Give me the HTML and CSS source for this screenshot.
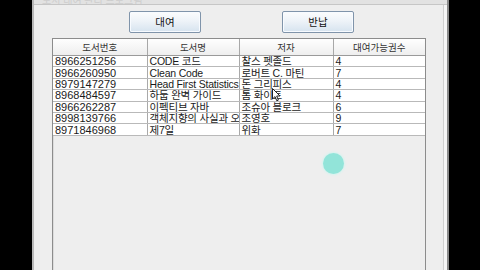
FILE: index.html
```html
<!DOCTYPE html>
<html lang="ko">
<head>
<meta charset="utf-8">
<title>도서 대여</title>
<link rel="stylesheet" href="styles.css">
</head>
<body>
<div class="window">
  <div class="titlebar"><span class="title">도서 대여 관리 프로그램</span></div>
  <div class="content">
    <div class="toolbar">
      <button class="btn">대여</button>
      <button class="btn">반납</button>
    </div>
    <div class="scrollpane">
      <table class="grid">
        <colgroup><col class="c1"><col class="c2"><col class="c3"><col class="c4"></colgroup>
        <thead>
          <tr><th>도서번호</th><th>도서명</th><th>저자</th><th>대여가능권수</th></tr>
        </thead>
        <tbody>
          <tr><td>8966251256</td><td>CODE 코드</td><td>찰스 펫졸드</td><td>4</td></tr>
          <tr><td>8966260950</td><td>Clean Code</td><td>로버트 C. 마틴</td><td>7</td></tr>
          <tr><td>8979147279</td><td>Head First Statistics</td><td>돈 그리피스</td><td>4</td></tr>
          <tr><td>8968484597</td><td>하둡 완벽 가이드</td><td>톰 화이트</td><td>4</td></tr>
          <tr><td>8966262287</td><td>이펙티브 자바</td><td>조슈아 블로크</td><td>6</td></tr>
          <tr><td>8998139766</td><td><span class="clip">객체지향의 사실과 오해</span></td><td>조영호</td><td>9</td></tr>
          <tr><td>8971846968</td><td>제7일</td><td>위화</td><td>7</td></tr>
        </tbody>
      </table>
    </div>
  </div>
  <svg class="cursor" width="9" height="14" viewBox="0 0 9 14"><path d="M0.5 0.5 L0.5 11 L3 8.6 L4.8 12.8 L6.4 12.1 L4.7 8 L8 8 Z" fill="#fff" stroke="#222" stroke-width="1"/></svg>
  <div class="click"></div>
</div>
</body>
</html>
```
FILE: styles.css
```css
html, body {
  margin: 0;
  padding: 0;
  background: #000;
  height: 270px;
  overflow: hidden;
}
body {
  font-family: "Liberation Sans", "Noto Sans CJK KR", sans-serif;
}
.window {
  position: relative;
  margin-left: 32px;
  width: 413px;
  height: 270px;
  background: #eeeeee;
  border-left: 2px solid #b8b8b8;
  border-right: 2px solid #8a8a8a;
  box-shadow: inset -3px 0 0 #f6f6f6, inset -4px 0 0 #d0d0d0;
  display: flex;
  flex-direction: column;
}
.titlebar {
  height: 4px;
  background: #e2e2e2;
  border-bottom: 1px solid #c6c6c6;
  overflow: hidden;
}
.title {
  display: block;
  font-size: 10px;
  line-height: 4px;
  margin-top: -1px;
  padding-left: 8px;
  color: #cdcdcd;
}
.content {
  flex: 1;
  display: flex;
  flex-direction: column;
  padding-left: 18px;
}
.toolbar {
  display: flex;
  gap: 81px;
  padding-left: 77px;
  padding-top: 6px;
  height: 22px;
}
.btn {
  width: 72px;
  height: 22px;
  margin: 0;
  padding: 0;
  border: 1px solid #8094aa;
  border-radius: 2px;
  background: linear-gradient(#fbfcfd 0%, #eef3f8 45%, #d6e3ef 100%);
  box-shadow: inset 0 0 0 1px #f8fbff;
  font-family: "Noto Sans CJK KR", "Liberation Sans", sans-serif;
  font-size: 10.5px;
  color: #111;
  line-height: 20px;
}
.scrollpane {
  margin-top: 5px;
  width: 372px;
  flex: 1;
  border: 1px solid #8c8c8c;
  border-bottom: none;
  box-shadow: inset 1px 1px 0 #dcdcdc;
  background: #eeeeee;
}
.grid {
  table-layout: fixed;
  border-collapse: collapse;
  width: 372px;
  color: #1a1a1a;
}
.c1 { width: 94px; }
.c2 { width: 92px; }
.c3 { width: 94px; }
.c4 { width: 92px; }
.grid th {
  height: 16px;
  padding: 0;
  font-weight: normal;
  font-family: "Noto Sans CJK KR", "Liberation Sans", sans-serif;
  font-size: 9.5px;
  color: #333;
  background: linear-gradient(#fefefe, #eeeeee);
  border-right: 1px solid #a8a8a8;
  border-bottom: 1px solid #9a9a9a;
  line-height: 15px;
  text-align: center;
}
.grid th:last-child { border-right: none; }
.grid td {
  height: 10.4px;
  padding: 0 0 0 2px;
  background: #fff;
  border-right: 1px solid #a9a9a9;
  border-bottom: 1px solid #b9b9b9;
  line-height: 10px;
  white-space: nowrap;
  overflow: hidden;
  font-family: "Liberation Sans", "Noto Sans CJK KR", sans-serif;
  font-size: 10.5px;
  letter-spacing: -0.2px;
}
.grid td:first-child {
  font-size: 11px;
  letter-spacing: 0;
}
.grid td:last-child { border-right: none; }
.clip {
  display: block;
  width: 89px;
  overflow: hidden;
}
.cursor {
  position: absolute;
  left: 238px;
  top: 88px;
}
.click {
  position: absolute;
  left: 289px;
  top: 153px;
  width: 21px;
  height: 21px;
  border-radius: 50%;
  background: #92e4d9;
  box-shadow: 0 0 2px 1px #d6f3ef;
}
```
